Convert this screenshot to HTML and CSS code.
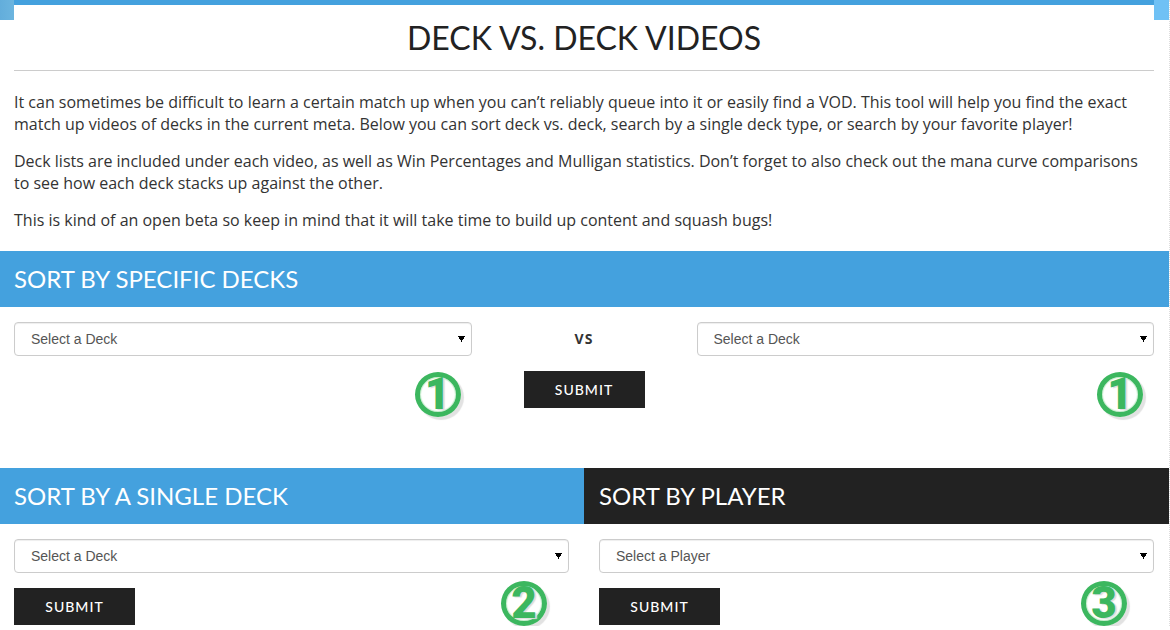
FILE: index.html
```html
<!DOCTYPE html>
<html lang="en">
<head>
  <meta charset="UTF-8">
  <title>Deck vs. Deck Videos</title>
  <link rel="stylesheet" href="styles.css">
</head>
<body>

  <div class="container">

    <div class="ribbon">
      <div class="ribbon-left"></div>
      <div class="ribbon-bar"></div>
      <div class="ribbon-right"></div>
    </div>

    <!-- Intro -->
    <div class="intro">
      <h1>Deck vs. Deck Videos</h1>
      <p>It can sometimes be difficult to learn a certain match up when you can’t reliably queue into it or easily find a VOD. This tool will help you find the exact match up videos of decks in the current meta. Below you can sort deck vs. deck, search by a single deck type, or search by your favorite player!</p>
      <p>Deck lists are included under each video, as well as Win Percentages and Mulligan statistics. Don’t forget to also check out the mana curve comparisons to see how each deck stacks up against the other.</p>
      <p>This is kind of an open beta so keep in mind that it will take time to build up content and squash bugs!</p>
    </div>

    <!-- Deck vs. deck -->
    <h2>Sort by Specific Decks</h2>
    <form class="versus">
      <div class="col deck">
        <select aria-label="First deck"><option>Select a Deck</option></select>
        <span class="badge">1</span>
      </div>
      <div class="col middle">
        <strong>VS</strong>
        <button type="submit">Submit</button>
      </div>
      <div class="col deck">
        <select aria-label="Second deck"><option>Select a Deck</option></select>
        <span class="badge">1</span>
      </div>
    </form>

    <!-- Single deck and player -->
    <div class="halves">
      <section>
        <h2>Sort by a Single Deck</h2>
        <form class="col">
          <select aria-label="Deck"><option>Select a Deck</option></select>
          <div class="actions">
            <button type="submit">Submit</button>
            <span class="badge">2</span>
          </div>
        </form>
      </section>
      <section>
        <h2 class="dark">Sort by Player</h2>
        <form class="col">
          <select aria-label="Player"><option>Select a Player</option></select>
          <div class="actions">
            <button type="submit">Submit</button>
            <span class="badge">3</span>
          </div>
        </form>
      </section>
    </div>

  </div>

</body>
</html>
```

FILE: styles.css
```css
* {
  box-sizing: border-box;
}
body {
  margin: 0;
  overflow-x: hidden;
  background: #fff;
  color: #333;
  font-family: "Open Sans", sans-serif;
  font-size: 16px;
  line-height: 22px;
}
.container {
  margin-left: -1px;
  border-right: 1px dotted #ddd;
}

/* Ribbon across the top, folded down at both ends */
.ribbon {
  display: flex;
  height: 20px;
}
.ribbon-left,
.ribbon-right {
  width: 15px;
  background: #6fc1f5;
}
.ribbon-left {
  background: linear-gradient(to right, #62addb, #6cb5df);
}
.ribbon-bar {
  flex: 1;
  height: 5px;
  background: #44a1de;
}

.intro {
  padding: 0 15px 20px;
}
.intro p {
  margin: 0 0 15px;
}
.intro p:last-child {
  margin-bottom: 0;
}
h1, h2 {
  margin: 0;
  font-family: Lato, sans-serif;
  font-weight: 400;
  text-transform: uppercase;
}
h1 {
  margin-bottom: 20px;
  padding-bottom: 14px;
  border-bottom: 1px solid #ccc;
  color: #222;
  font-size: 32px;
  line-height: 36px;
  text-align: center;
}
h2 {
  padding: 0 15px;
  background: #44a1de;
  color: #fff;
  font-size: 24px;
  line-height: 56px;
}
h2.dark {
  background: #222;
}

.versus {
  display: grid;
  grid-template-columns: 5fr 2fr 5fr;
  padding-bottom: 51px;
}
.halves {
  display: grid;
  grid-template-columns: 1fr 1fr;
}
.col {
  padding: 15px 15px 0;
}
.deck {
  display: flex;
  flex-direction: column;
}
.deck .badge {
  align-self: flex-end;
  margin: 16px 11px 0 0;
}
.middle {
  display: flex;
  flex-direction: column;
  align-items: center;
}
.middle strong {
  margin-bottom: 15px;
  font-size: 14px;
  line-height: 34px;
  letter-spacing: 1px;
}

select {
  display: block;
  width: 100%;
  height: 34px;
  padding: 0 16px;
  border: 1px solid #ccc;
  border-radius: 4px;
  appearance: none;
  background: #fff;
  background-image: conic-gradient(from -30deg at 50% 100%, #000 60deg, transparent 0);
  background-position: right 6px center;
  background-repeat: no-repeat;
  background-size: 7px 6px;
  box-shadow: inset 0 1px 1px rgba(0,0,0,0.07);
  color: #555;
  font-family: "Liberation Sans", Arial, sans-serif;
  font-size: 14px;
}
button {
  width: 121px;
  height: 37px;
  padding: 0;
  border: none;
  background: #222;
  color: #fff;
  font-family: Lato, sans-serif;
  font-size: 14px;
  font-weight: 500;
  letter-spacing: 1px;
  text-transform: uppercase;
  cursor: pointer;
}
button:hover {
  background: #44a1de;
}
.actions {
  display: flex;
  justify-content: space-between;
  align-items: flex-start;
  padding-top: 8px;
}
.actions button {
  margin-top: 7px;
}
.actions .badge {
  margin-right: 22px;
}
section:last-child .badge {
  margin-right: 27px;
}

.badge {
  width: 46px;
  height: 45px;
  border: 5px solid #3cb75f;
  border-radius: 50%;
  box-shadow: 3px 3px 1px #e2e2e2, inset 0 0 1px 1px #c5edcc;
  color: #3cb75f;
  font-family: Roboto, sans-serif;
  font-size: 44px;
  font-weight: 900;
  line-height: 34px;
  text-align: center;
  text-shadow: 2px 1px 1px #ddd;
}
```
